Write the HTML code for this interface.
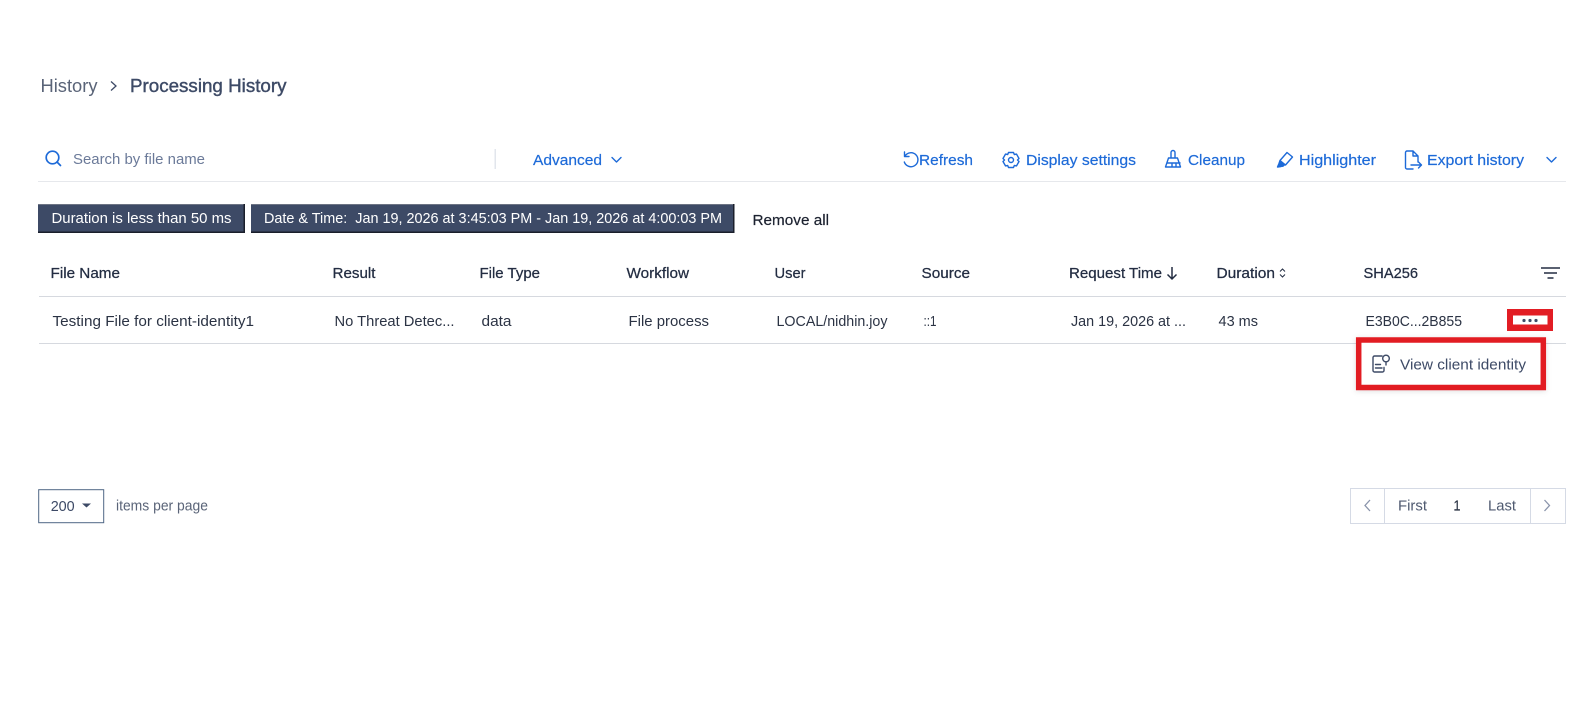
<!DOCTYPE html>
<html lang="en"><head><meta charset="utf-8"><title>Processing History</title>
<style>
html,body{margin:0;padding:0;background:#fff;width:1579px;height:721px;overflow:hidden}
svg{display:block}
text{font-family:"Liberation Sans",sans-serif;font-size:15px}
.h{fill:#232d42;stroke:#232d42;stroke-width:.25}
.r{fill:#2b3344}
.b{fill:#1d6ad8;stroke:#1d6ad8;stroke-width:.2}
.c{fill:#fff}
.i{fill:none;stroke:#1d6ad8;stroke-width:1.4;stroke-linecap:round;stroke-linejoin:round}
.g{fill:none;stroke:#3d4a66;stroke-width:1.4;stroke-linecap:round;stroke-linejoin:round}
</style></head><body>
<svg width="1579" height="721" viewBox="0 0 1579 721" xmlns="http://www.w3.org/2000/svg">
<defs><filter id="s" x="-10%" y="-20%" width="120%" height="140%"><feDropShadow dx="0" dy="1" stdDeviation="3" flood-color="#000" flood-opacity=".12"/></filter></defs>
<rect width="1579" height="721" fill="#fff"/>

<text x="40.500" y="92" style="font-size:18px" fill="#5a6478" textLength="57" lengthAdjust="spacingAndGlyphs">History</text>
<path d="M111 81.500l5 4.500-5 4.500" fill="none" stroke="#3d4a66" stroke-width="1.300"/>
<text x="130" y="92" style="font-size:18px" fill="#3d4a66" stroke="#3d4a66" stroke-width=".4" textLength="156.500" lengthAdjust="spacingAndGlyphs">Processing History</text>

<circle cx="52.500" cy="157.500" r="6.300" class="i" style="stroke-width:1.700"/><path d="M57 162l3.500 3.500" class="i" style="stroke-width:1.700"/>
<text x="73" y="164" fill="#6b7a99" textLength="132" lengthAdjust="spacingAndGlyphs">Search by file name</text>
<rect x="494.500" y="149" width="1.500" height="20" fill="#e2e6ec"/>
<text x="533" y="165" class="b" textLength="69" lengthAdjust="spacingAndGlyphs">Advanced</text>
<path d="M612 157.500l4.500 4.500 4.500-4.500" class="i"/>

<path d="M904.500 156.500v-4.500M904.500 156.500h4.500M905 156a7 7 0 1 1-.7 6" class="i"/>
<text x="919" y="165" class="b" textLength="54" lengthAdjust="spacingAndGlyphs">Refresh</text>
<circle cx="1011" cy="160" r="2.500" class="i"/><path d="M1008.500 152.500h5l.8 2 2.200-.4 2.500 4.400-1.500 1.500 1.500 1.500-2.500 4.400-2.200-.4-.8 2h-5l-.8-2-2.200.4-2.500-4.400 1.500-1.500-1.500-1.500 2.500-4.400 2.200.4z" class="i"/>
<text x="1026" y="165" class="b" textLength="110" lengthAdjust="spacingAndGlyphs">Display settings</text>
<path d="M1171 158v-5.500a2 2 0 0 1 4 0v5.500M1168.500 158h9l3 9h-15zM1172 167v-3M1176 167v-3M1167 163h13" class="i"/>
<text x="1188" y="165" class="b" textLength="57" lengthAdjust="spacingAndGlyphs">Cleanup</text>
<path d="M1287 152.500l5.500 4.500-7 8-5.500-4.500zM1280 160.500l-1 3-1.500 3.500 3.500-.5 2.500-1.500" class="i"/><path d="M1280 160.500l5.500 4.500-2.500 2-3.500-.5-1.500.5.500-3z" fill="#1d6ad8"/>
<text x="1299" y="165" class="b" textLength="77" lengthAdjust="spacingAndGlyphs">Highlighter</text>
<path d="M1418 162v-6l-5-5h-6a1.500 1.500 0 0 0-1.500 1.500v15a1.500 1.500 0 0 0 1.500 1.500h6M1413 151v5h5M1411 165h10M1418.500 162l3 3-3 3" class="i"/>
<text x="1427" y="165" class="b" textLength="97" lengthAdjust="spacingAndGlyphs">Export history</text>
<path d="M1547 157.500l4.500 4.500 4.500-4.500" class="i"/>
<rect x="38" y="181" width="1528" height="1" fill="#e6e8ec"/>

<rect x="38" y="204" width="207" height="29" fill="#1a1f2b"/>
<rect x="38" y="204" width="205.500" height="27.500" fill="#3d4a66"/>
<rect x="38" y="204" width="205.500" height="1" fill="#6d7484"/>
<text x="51.500" y="223" class="c" textLength="180" lengthAdjust="spacingAndGlyphs">Duration is less than 50 ms</text>
<rect x="251" y="204" width="483.500" height="29" fill="#1a1f2b"/>
<rect x="251" y="204" width="482" height="27.500" fill="#3d4a66"/>
<rect x="251" y="204" width="482" height="1" fill="#6d7484"/>
<text x="264" y="223" class="c" textLength="458" lengthAdjust="spacingAndGlyphs" xml:space="preserve">Date &amp; Time:  Jan 19, 2026 at 3:45:03 PM - Jan 19, 2026 at 4:00:03 PM</text>
<text x="752.500" y="225" fill="#1c2230" stroke="#1c2230" stroke-width=".2" textLength="76.500" lengthAdjust="spacingAndGlyphs">Remove all</text>

<text x="50.500" y="278" class="h" textLength="69.500" lengthAdjust="spacingAndGlyphs">File Name</text>
<text x="332.500" y="278" class="h" textLength="43" lengthAdjust="spacingAndGlyphs">Result</text>
<text x="479.500" y="278" class="h" textLength="60.500" lengthAdjust="spacingAndGlyphs">File Type</text>
<text x="626.500" y="278" class="h" textLength="62.500" lengthAdjust="spacingAndGlyphs">Workflow</text>
<text x="774.500" y="278" class="h" textLength="31" lengthAdjust="spacingAndGlyphs">User</text>
<text x="921.500" y="278" class="h" textLength="48.500" lengthAdjust="spacingAndGlyphs">Source</text>
<text x="1069" y="278" class="h" textLength="93" lengthAdjust="spacingAndGlyphs">Request Time</text>
<path d="M1172 267v12M1167.500 274.500l4.500 4.500 4.500-4.500" fill="none" stroke="#232d42" stroke-width="1.500"/>
<text x="1216.500" y="278" class="h" textLength="58.500" lengthAdjust="spacingAndGlyphs">Duration</text>
<path d="M1280 271.500l2.500-2.500 2.500 2.500M1280 274.500l2.500 2.500 2.500-2.500" fill="none" stroke="#232d42" stroke-width="1"/>
<text x="1363.500" y="278" class="h" textLength="54.500" lengthAdjust="spacingAndGlyphs">SHA256</text>
<path d="M1541 268h19M1544 273h13M1547.500 278h6" fill="none" stroke="#232d42" stroke-width="1.500"/>
<rect x="39" y="296" width="1527" height="1" fill="#d6d9df"/>

<text x="52.500" y="326" class="r" textLength="201.500" lengthAdjust="spacingAndGlyphs">Testing File for client-identity1</text>
<text x="334.500" y="326" class="r" textLength="120" lengthAdjust="spacingAndGlyphs">No Threat Detec...</text>
<text x="481.500" y="326" class="r" textLength="30" lengthAdjust="spacingAndGlyphs">data</text>
<text x="628.500" y="326" class="r" textLength="80.500" lengthAdjust="spacingAndGlyphs">File process</text>
<text x="776.500" y="326" class="r" textLength="111" lengthAdjust="spacingAndGlyphs">LOCAL/nidhin.joy</text>
<text x="923.500" y="326" class="r" textLength="13" lengthAdjust="spacingAndGlyphs">::1</text>
<text x="1071" y="326" class="r" textLength="115" lengthAdjust="spacingAndGlyphs">Jan 19, 2026 at ...</text>
<text x="1218.500" y="326" class="r" textLength="39.500" lengthAdjust="spacingAndGlyphs">43 ms</text>
<text x="1365.500" y="326" class="r" textLength="96.500" lengthAdjust="spacingAndGlyphs">E3B0C...2B855</text>
<rect x="39" y="343" width="1527" height="1" fill="#d6d9df"/>

<rect x="1507" y="309" width="46" height="22" fill="#e21d24"/>
<rect x="1513" y="315.500" width="34.500" height="9" fill="#fff"/>
<circle cx="1524" cy="320.500" r="1.600" fill="#3d4a66"/><circle cx="1530" cy="320.500" r="1.600" fill="#3d4a66"/><circle cx="1536" cy="320.500" r="1.600" fill="#3d4a66"/>

<rect x="1358.700" y="340" width="184.600" height="47.500" fill="#fff" stroke="#e21d24" stroke-width="5.500" filter="url(#s)"/>
<path d="M1382 356h-7.500a1.500 1.500 0 0 0-1.500 1.500v13a1.500 1.500 0 0 0 1.500 1.500h8a1.500 1.500 0 0 0 1.500-1.500v-3M1375.500 364.500h5M1375.500 368h6.500" class="g"/>
<circle cx="1386" cy="358.500" r="3.300" class="g"/><path d="M1386 362v3" class="g"/>
<text x="1400" y="369.500" fill="#3d4a66" textLength="126" lengthAdjust="spacingAndGlyphs">View client identity</text>

<rect x="38.700" y="489.700" width="65" height="33" fill="#fff" stroke="#4f6785" stroke-width="1"/>
<text x="50.700" y="511" fill="#3d4a66" textLength="24" lengthAdjust="spacingAndGlyphs">200</text>
<path d="M82 503.500h9l-4.500 4z" fill="#3d4a66"/>
<text x="116" y="510.500" fill="#5a6478" textLength="92" lengthAdjust="spacingAndGlyphs">items per page</text>

<rect x="1350.500" y="488.500" width="215" height="35" fill="#fff" stroke="#d5dae5"/>
<path d="M1384.500 488.500v35M1530.500 488.500v35" stroke="#d5dae5" fill="none"/>
<path d="M1370 500l-5 5.500 5 5.500M1544.500 500l5 5.500-5 5.500" fill="none" stroke="#8a94ab" stroke-width="1.300"/>
<text x="1398" y="510.500" fill="#4f5a70" textLength="29" lengthAdjust="spacingAndGlyphs">First</text>
<text x="1453.500" y="510.500" fill="#2b3344" stroke="#2b3344" stroke-width=".2" textLength="7" lengthAdjust="spacingAndGlyphs">1</text>
<text x="1488" y="510.500" fill="#4f5a70" textLength="28" lengthAdjust="spacingAndGlyphs">Last</text>
</svg>
</body></html>
